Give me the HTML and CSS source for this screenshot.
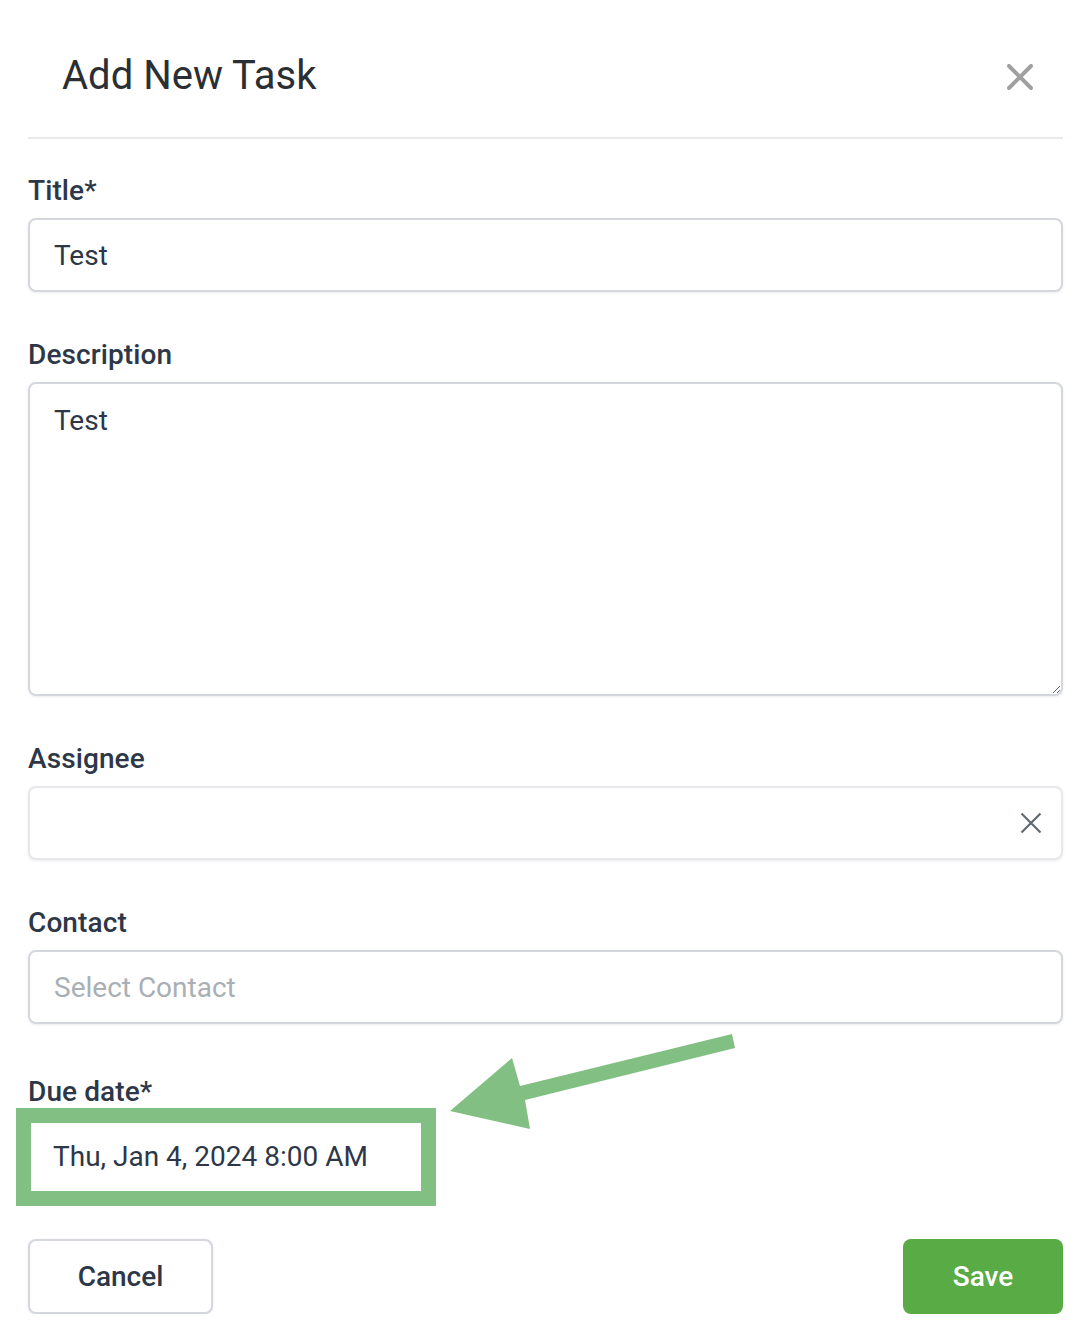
FILE: index.html
```html
<!DOCTYPE html>
<html lang="en">
<head>
<meta charset="utf-8">
<title>Add New Task</title>
<link rel="stylesheet" href="styles.css">
</head>
<body>
<div class="modal">
  <header class="modal-header">
    <h1 class="modal-title">Add New Task</h1>
    <button class="close-btn" type="button" aria-label="Close">
      <svg width="26" height="26" viewBox="0 0 26 26"><path d="M2 2 L24 24 M24 2 L2 24" stroke="#a0a0a0" stroke-width="4" stroke-linecap="round" fill="none"/></svg>
    </button>
  </header>

  <form class="form">
    <div class="field">
      <label class="label">Title*</label>
      <input class="control" type="text" value="Test" readonly>
    </div>

    <div class="field">
      <label class="label">Description</label>
      <textarea class="control textarea" readonly>Test</textarea>
    </div>

    <div class="field">
      <label class="label">Assignee</label>
      <div class="control select light">
        <span class="select-value"></span>
        <svg class="clear-icon" width="22" height="22" viewBox="0 0 22 22"><path d="M1.5 1.5 L20.5 20.5 M20.5 1.5 L1.5 20.5" stroke="#5f6b73" stroke-width="2.2" fill="none"/></svg>
      </div>
    </div>

    <div class="field">
      <label class="label">Contact</label>
      <div class="control select">
        <span class="placeholder">Select Contact</span>
      </div>
    </div>

    <div class="field due">
      <label class="label">Due date*</label>
      <div class="highlight">
        <div class="date-value">Thu, Jan 4, 2024 8:00 AM</div>
      </div>
      <svg class="arrow" width="300" height="110" viewBox="0 0 300 110">
        <polygon points="282,3 70,55 62,27 0,80 80,98 75,69 285,17" fill="#82bf82"/>
      </svg>
    </div>

    <div class="actions">
      <button type="button" class="btn btn-cancel">Cancel</button>
      <button type="button" class="btn btn-save">Save</button>
    </div>
  </form>
</div>
</body>
</html>
```

FILE: styles.css
```css
* { box-sizing: border-box; }

html, body {
  margin: 0;
  padding: 0;
  background: #ffffff;
}

body {
  font-family: Roboto, "Liberation Sans", Arial, sans-serif;
  color: #2d3748;
}

.modal {
  padding: 0 29px 0 28px;
}

.modal-header {
  display: flex;
  align-items: center;
  justify-content: space-between;
  padding: 53px 30px 38px 34px;
  border-bottom: 2px solid #e8e8ee;
}

.modal-title {
  margin: 0;
  font-size: 40px;
  line-height: 46px;
  font-weight: 400;
  color: #2b2f33;
}

.close-btn {
  border: 0;
  background: none;
  padding: 0;
  margin-top: 2px;
  display: flex;
  cursor: pointer;
}

.form {
  display: flex;
  flex-direction: column;
  padding-top: 33px;
}

.field {
  display: flex;
  flex-direction: column;
  margin-bottom: 44px;
  position: relative;
}

.label {
  font-size: 28px;
  line-height: 34px;
  font-weight: 500;
  color: #2d3748;
  padding-top: 2px;
  margin-bottom: 10px;
  letter-spacing: 0.1px;
}

.control {
  width: 100%;
  height: 74px;
  border: 2px solid #d4d8dd;
  border-radius: 8px;
  background: #fff;
  box-shadow: 0 1px 3px rgba(0, 0, 0, 0.08);
  padding: 0 24px;
  font-family: Roboto, "Liberation Sans", Arial, sans-serif;
  font-size: 28px;
  color: #2d3748;
  outline: none;
}

.textarea {
  height: 314px;
  padding: 20px 24px;
  line-height: 34px;
  resize: vertical;
  display: block;
}

.select {
  display: flex;
  align-items: center;
  justify-content: space-between;
  padding-right: 19px;
}

.select.light {
  border-color: #e6e8ec;
}

.placeholder {
  color: #a9afb4;
}

.due {
  margin-top: 5px;
  margin-bottom: 33px;
}

.due .label {
  margin-bottom: -1px;
}

.highlight {
  margin-left: -12px;
  width: 420px;
  height: 98px;
  border: 15px solid #82bf82;
  background: #fff;
  display: flex;
  align-items: center;
  padding-left: 22px;
}

.date-value {
  font-size: 28px;
  color: #2d3748;
  line-height: 34px;
}

.arrow {
  position: absolute;
  left: 422px;
  top: -42px;
}

.actions {
  display: flex;
  justify-content: space-between;
}

.btn {
  height: 75px;
  border-radius: 8px;
  font-family: Roboto, "Liberation Sans", Arial, sans-serif;
  font-size: 28px;
  font-weight: 500;
  cursor: pointer;
}

.btn-cancel {
  width: 185px;
  background: #fff;
  border: 2px solid #d4d8dd;
  color: #2d3748;
  box-shadow: 0 1px 3px rgba(0, 0, 0, 0.08);
}

.btn-save {
  width: 160px;
  background: #58ab45;
  border: 0;
  color: #fff;
}
```
